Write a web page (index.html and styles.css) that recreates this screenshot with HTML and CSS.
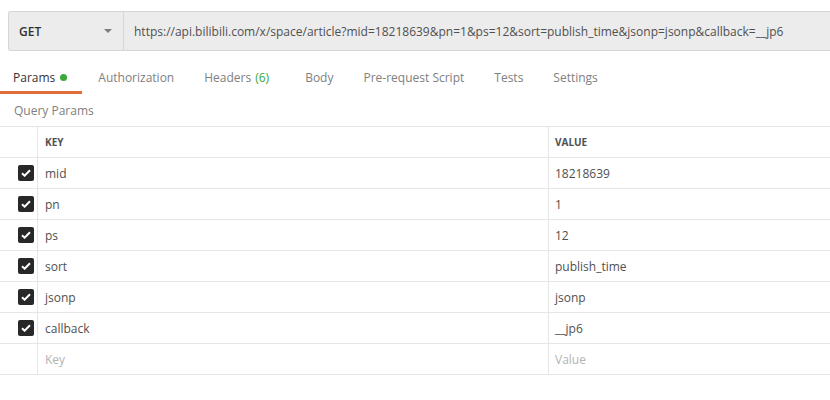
FILE: index.html
```html
<!DOCTYPE html>
<html>
<head>
<meta charset="utf-8">
<link rel="stylesheet" href="styles.css">
</head>
<body>
<div class="urlbar">
  <div class="method">
    <span class="method-name">GET</span>
    <svg class="caret" width="8" height="4" viewBox="0 0 8 4"><path d="M0 0h8L4 4z" fill="#7d7d7d"/></svg>
  </div>
  <div class="url">https://api.bilibili.com/x/space/article?mid=18218639&amp;pn=1&amp;ps=12&amp;sort=publish_time&amp;jsonp=jsonp&amp;callback=__jp6</div>
</div>

<div class="tabs">
  <div class="tab tab-params active">Params <span class="dot"></span></div>
  <div class="tab tab-auth">Authorization</div>
  <div class="tab tab-headers">Headers <span class="count">(6)</span></div>
  <div class="tab tab-body">Body</div>
  <div class="tab tab-pre">Pre-request Script</div>
  <div class="tab tab-tests">Tests</div>
  <div class="tab tab-settings">Settings</div>
</div>

<div class="section-title">Query Params</div>

<div class="table">
  <div class="row head">
    <div class="cell check"></div>
    <div class="cell key">KEY</div>
    <div class="cell value">VALUE</div>
  </div>
  <div class="row">
    <div class="cell check"><span class="cb"><svg width="10" height="8" viewBox="0 0 10 8"><path d="M1 4.2l2.6 2.5L9 1.2" fill="none" stroke="#fff" stroke-width="2"/></svg></span></div>
    <div class="cell key">mid</div>
    <div class="cell value">18218639</div>
  </div>
  <div class="row">
    <div class="cell check"><span class="cb"><svg width="10" height="8" viewBox="0 0 10 8"><path d="M1 4.2l2.6 2.5L9 1.2" fill="none" stroke="#fff" stroke-width="2"/></svg></span></div>
    <div class="cell key">pn</div>
    <div class="cell value">1</div>
  </div>
  <div class="row">
    <div class="cell check"><span class="cb"><svg width="10" height="8" viewBox="0 0 10 8"><path d="M1 4.2l2.6 2.5L9 1.2" fill="none" stroke="#fff" stroke-width="2"/></svg></span></div>
    <div class="cell key">ps</div>
    <div class="cell value">12</div>
  </div>
  <div class="row">
    <div class="cell check"><span class="cb"><svg width="10" height="8" viewBox="0 0 10 8"><path d="M1 4.2l2.6 2.5L9 1.2" fill="none" stroke="#fff" stroke-width="2"/></svg></span></div>
    <div class="cell key">sort</div>
    <div class="cell value">publish_time</div>
  </div>
  <div class="row">
    <div class="cell check"><span class="cb"><svg width="10" height="8" viewBox="0 0 10 8"><path d="M1 4.2l2.6 2.5L9 1.2" fill="none" stroke="#fff" stroke-width="2"/></svg></span></div>
    <div class="cell key">jsonp</div>
    <div class="cell value">jsonp</div>
  </div>
  <div class="row">
    <div class="cell check"><span class="cb"><svg width="10" height="8" viewBox="0 0 10 8"><path d="M1 4.2l2.6 2.5L9 1.2" fill="none" stroke="#fff" stroke-width="2"/></svg></span></div>
    <div class="cell key">callback</div>
    <div class="cell value">__jp6</div>
  </div>
  <div class="row">
    <div class="cell check"></div>
    <div class="cell key placeholder">Key</div>
    <div class="cell value placeholder">Value</div>
  </div>
</div>
</body>
</html>
```

FILE: styles.css
```css
html, body {
  margin: 0;
  padding: 0;
  background: #ffffff;
  font-family: "Open Sans", "DejaVu Sans", sans-serif;
  color: #505050;
  overflow: hidden;
}

.urlbar {
  display: flex;
  height: 38px;
  margin: 11px 0 0 8px;
  border: 1px solid #d6d6d6;
  border-right: none;
  border-radius: 3px 0 0 3px;
  background: #ececec;
  font-size: 12px;
}

.method {
  flex: 0 0 auto;
  width: 104px;
  padding-left: 10px;
  display: flex;
  align-items: center;
  justify-content: space-between;
  border-right: 1px solid #d6d6d6;
  box-sizing: content-box;
}

.method-name {
  font-weight: 600;
  color: #333333;
}

.caret {
  margin-right: 11px;
}

.url {
  flex: 1;
  min-width: 0;
  display: flex;
  align-items: center;
  padding-left: 10px;
  color: #505050;
  white-space: nowrap;
  overflow: hidden;
}

.tabs {
  display: flex;
  margin-top: 11px;
  font-size: 12px;
}

.tab {
  display: flex;
  align-items: center;
  padding: 2px 13px 0;
  color: #808080;
  border-bottom: 3px solid transparent;
  height: 27px;
  white-space: nowrap;
}

.tab.active {
  color: #333333;
  border-bottom-color: #e06c37;
  padding-right: 15px;
}

.tab-auth { margin-left: 3px; }
.tab-headers { margin-left: 4px; }
.tab-body { margin-left: 10px; }
.tab-pre { margin-left: 4px; }
.tab-tests { margin-left: 4px; }
.tab-settings { margin-left: 4px; }

.dot {
  display: inline-block;
  width: 7px;
  height: 7px;
  border-radius: 50%;
  background: #3aaa3a;
  margin-left: 5px;
}

.count {
  color: #3aa63a;
  margin-left: 4px;
}

.section-title {
  height: 32px;
  display: flex;
  align-items: center;
  padding-left: 14px;
  font-size: 12px;
  color: #808080;
}

.table {
  border-top: 1px solid #e6e6e6;
  font-size: 12px;
}

.row {
  display: grid;
  grid-template-columns: 38px 511px 1fr;
  height: 30px;
  border-bottom: 1px solid #e6e6e6;
}

.cell {
  display: flex;
  align-items: center;
  white-space: nowrap;
}

.check {
  justify-content: flex-end;
  padding-right: 3px;
  border-right: 1px solid #e6e6e6;
}

.key {
  padding-left: 7px;
  border-right: 1px solid #e6e6e6;
}

.value {
  padding-left: 6px;
}

.head .key, .head .value {
  font-size: 10px;
  font-weight: 700;
  color: #505050;
}

.cb {
  width: 16px;
  height: 16px;
  border-radius: 2px;
  background: #282828;
  display: flex;
  align-items: center;
  justify-content: center;
}

.placeholder {
  color: #b3b3b3;
}
```
